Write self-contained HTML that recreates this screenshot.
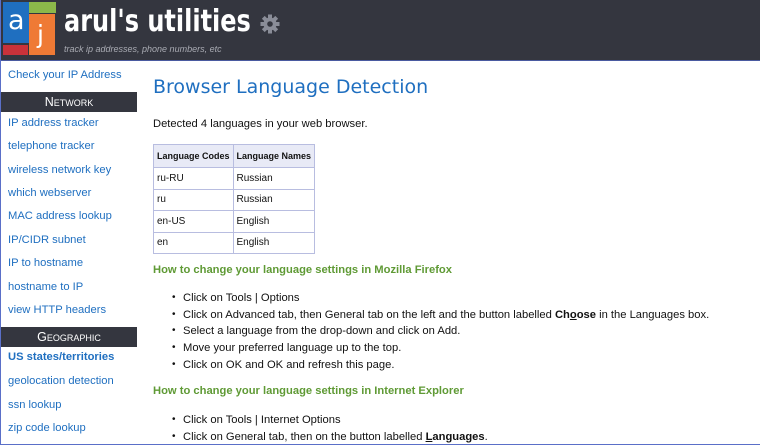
<!DOCTYPE html>
<html><head><style>
*{margin:0;padding:0;box-sizing:border-box}
body{width:760px;height:445px;overflow:hidden;background:#fff;font-family:"Liberation Sans",Arial,sans-serif;position:relative;border-left:1px solid #5a6fc8;border-bottom:1px solid #5a6fc8}
.hdr{position:absolute;left:0;top:0;width:760px;height:61px;background:#34363f;border-bottom:1px solid #4a5aa0}
.b{position:absolute}
.title{position:absolute;left:63px;top:4px;color:#fff;font-family:"DejaVu Sans",sans-serif;font-weight:bold;font-size:30px;transform:scaleX(0.8);transform-origin:left top;white-space:nowrap}
.tag{position:absolute;left:63px;top:44px;color:#a9abb3;font-style:italic;font-size:9px}
.side{position:absolute;left:0;top:61px;width:137px;height:384px}
.side a{position:absolute;left:7px;color:#1f6fc0;font-size:11.2px;text-decoration:none;white-space:nowrap}
.bar{position:absolute;left:0;width:136px;height:20px;background:#34363f;color:#fff;text-align:center;font-size:12.5px;line-height:20px;font-variant:small-caps}
h1{position:absolute;left:152px;top:76px;font-family:"DejaVu Sans",sans-serif;font-weight:normal;color:#1f6fc0;font-size:19px;white-space:nowrap}
.p{position:absolute;left:152px;font-size:11.2px;color:#111;white-space:nowrap}
table{position:absolute;left:152px;top:144px;border-collapse:collapse;font-size:10px;color:#111;white-space:nowrap}
td,th{border:1px solid #b8bde0;height:21.5px;padding:0 3px;text-align:left}
th{background:#e8eaf6;height:23px;font-weight:bold;font-size:9px}
.g{position:absolute;left:152px;color:#5f9a35;font-weight:bold;font-size:11.2px;white-space:nowrap}
ul{position:absolute;left:182px;font-size:11.2px;color:#111;list-style:none;line-height:16.7px;white-space:nowrap}
ul li{position:relative}
ul li:before{content:"•";position:absolute;left:-11px;font-size:10px}
</style></head><body>
<div class="hdr">
<div class="b" style="left:2px;top:2px;width:26px;height:41px;background:#1f6fc0"></div>
<div class="b" style="left:2px;top:45px;width:25px;height:10px;background:#c9323a"></div>
<div class="b" style="left:28px;top:2px;width:27px;height:11px;background:#8cb84a"></div>
<div class="b" style="left:28px;top:14px;width:26px;height:41px;background:#ef7a35"></div>
<div class="b" style="left:7px;top:5px;color:#fff;font-size:27px;font-family:'DejaVu Sans',sans-serif">a</div>
<div class="b" style="left:36px;top:20px;color:#fff;font-size:25px;font-family:'DejaVu Sans',sans-serif">j</div>
<div class="title">arul's utilities</div>
<svg class="b" style="left:259px;top:14px" width="20" height="20" viewBox="0 0 20 20"><g fill="#8a8d98"><circle cx="10" cy="10" r="6.5"/><rect x="8" y="0.5" width="4" height="19"/><rect x="0.5" y="8" width="19" height="4"/><rect x="8" y="0.5" width="4" height="19" transform="rotate(45 10 10)"/><rect x="8" y="0.5" width="4" height="19" transform="rotate(-45 10 10)"/></g><circle cx="10" cy="10" r="2.8" fill="#34363f"/></svg>
<div class="tag">track ip addresses, phone numbers, etc</div>
</div>
<div class="side">
<a style="top:8px">Check your IP Address</a>
<div class="bar" style="top:31px">Network</div>
<a style="top:56px">IP address tracker</a>
<a style="top:79px">telephone tracker</a>
<a style="top:103px">wireless network key</a>
<a style="top:126px">which webserver</a>
<a style="top:149px">MAC address lookup</a>
<a style="top:173px">IP/CIDR subnet</a>
<a style="top:196px">IP to hostname</a>
<a style="top:220px">hostname to IP</a>
<a style="top:243px">view HTTP headers</a>
<div class="bar" style="top:266px">Geographic</div>
<a style="top:290px;font-weight:bold">US states/territories</a>
<a style="top:314px">geolocation detection</a>
<a style="top:338px">ssn lookup</a>
<a style="top:361px">zip code lookup</a>
</div>
<h1>Browser Language Detection</h1>
<div class="p" style="top:118px">Detected 4 languages in your web browser.</div>
<table>
<tr><th>Language Codes</th><th>Language Names</th></tr>
<tr><td>ru-RU</td><td>Russian</td></tr>
<tr><td>ru</td><td>Russian</td></tr>
<tr><td>en-US</td><td>English</td></tr>
<tr><td>en</td><td>English</td></tr>
</table>
<div class="g" style="top:264px">How to change your language settings in Mozilla Firefox</div>
<ul style="top:290px">
<li>Click on Tools | Options</li>
<li>Click on Advanced tab, then General tab on the left and the button labelled <b>Ch<u>o</u>ose</b> in the Languages box.</li>
<li>Select a language from the drop-down and click on Add.</li>
<li>Move your preferred language up to the top.</li>
<li>Click on OK and OK and refresh this page.</li>
</ul>
<div class="g" style="top:385px">How to change your language settings in Internet Explorer</div>
<ul style="top:412px">
<li>Click on Tools | Internet Options</li>
<li>Click on General tab, then on the button labelled <b><u>L</u>anguages</b>.</li>
</ul>
</body></html>
